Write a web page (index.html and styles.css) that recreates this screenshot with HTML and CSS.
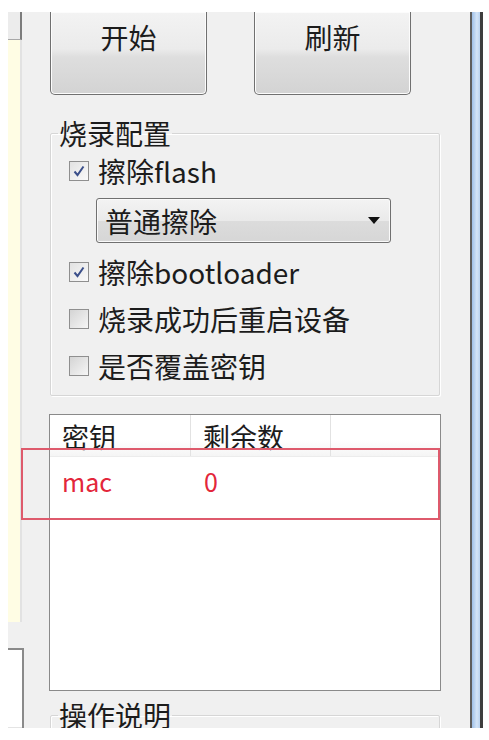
FILE: index.html
```html
<!doctype html>
<html lang="zh-CN">
<head>
    <meta charset="UTF-8">
    <meta name="viewport" content="width=device-width, initial-scale=1.0">
    <title>烧录工具</title>
    <link rel="stylesheet" href="styles.css">
</head>
<body>
<div class="screen">
    <div class="side">
        <div class="side__tab"></div>
        <div class="side__memo"></div>
        <div class="side__box"></div>
    </div>
    <div class="panel">
        <div class="actions">
            <button class="button">开始</button>
            <button class="button">刷新</button>
        </div>
        <fieldset class="group">
            <legend class="group__title">烧录配置</legend>
            <label class="check">
                <span class="check__box check__box--on"><svg viewBox="0 0 16 16" width="16" height="16"><path d="M3.5 8.5 L6.5 12 L12.5 3.5" fill="none" stroke="#3b4f8a" stroke-width="2"/></svg></span>
                <span>擦除flash</span>
            </label>
            <div class="select">
                <span>普通擦除</span>
                <span class="select__arrow"></span>
            </div>
            <label class="check">
                <span class="check__box check__box--on"><svg viewBox="0 0 16 16" width="16" height="16"><path d="M3.5 8.5 L6.5 12 L12.5 3.5" fill="none" stroke="#3b4f8a" stroke-width="2"/></svg></span>
                <span>擦除bootloader</span>
            </label>
            <label class="check">
                <span class="check__box"></span>
                <span>烧录成功后重启设备</span>
            </label>
            <label class="check">
                <span class="check__box"></span>
                <span>是否覆盖密钥</span>
            </label>
        </fieldset>
        <div class="keys">
            <div class="keys__head">
                <div class="keys__cell">密钥</div>
                <div class="keys__cell">剩余数</div>
                <div class="keys__cell"></div>
            </div>
            <div class="keys__row">
                <div class="keys__cell">mac</div>
                <div class="keys__cell">0</div>
            </div>
        </div>
        <fieldset class="group group--help">
            <legend class="group__title">操作说明</legend>
        </fieldset>
    </div>
    <div class="edge"></div>
    <div class="mark"></div>
</div>
</body>
</html>
```

FILE: styles.css
```css
html,body{margin:0;padding:0;background:#fff;font-family:"Noto Sans CJK SC","Microsoft YaHei",sans-serif;color:#1c1c1c}
.screen{position:relative;display:flex;margin:12px 6px 0 8px;height:716px;overflow:hidden;background:#f0f0f0}

.side{display:flex;flex-direction:column;width:16px;flex:none}
.side__tab{width:12px;height:27px;background:#ececec;border-right:2px solid #7c7c7c;border-bottom:1px solid #a8a8a8}
.side__memo{width:12px;height:582px;background:#fffde4;border-right:2px solid #e2e2e2}
.side__box{margin-top:26px;flex:1;background:#fff;border-top:2px solid #8a8a8a;border-right:2px solid #8a8a8a;box-shadow:inset 0 -36px 0 -35px #e4e4e4}

.panel{flex:1;padding-left:26px;font-size:28px;line-height:30px}
.actions{display:flex;gap:47px}
.button{width:157px;height:83px;padding:0 0 32px;margin:0;border:1px solid #707070;border-top:none;border-radius:0 0 5px 5px;background:linear-gradient(#f3f3f3,#ebebeb 45%,#dedede 55%,#d3d3d3);font:inherit;font-size:28px;line-height:30px;color:#1c1c1c;text-align:center;vertical-align:top;box-shadow:inset 0 0 0 1px #fcfcfc}

.group{width:390px;box-sizing:border-box;margin:23px 0 0;padding:0 0 6px 18px;border:1px solid #d6d6d6;box-shadow:inset 1px 1px 0 #fff,1px 1px 0 #fff;border-radius:2px}
.group__title{padding:0 1px;margin-left:-11px;font-size:28px;line-height:30px}

.check{display:flex;align-items:center;gap:9px;height:47px;white-space:nowrap}
.check:first-of-type{height:46px}
.check__box{display:flex;align-items:center;justify-content:center;width:18px;height:18px;border:1px solid #8f8f8f;background:linear-gradient(135deg,#d4d4d4,#f6f6f6);flex:none}
.check__box--on{background:linear-gradient(135deg,#e2e2e2,#fafafa)}

.select{display:flex;align-items:center;justify-content:space-between;width:295px;height:45px;box-sizing:border-box;margin:4px 0 5px 27px;padding:0 10px 0 8px;border:1px solid #707070;border-radius:3px;background:linear-gradient(#f3f3f3,#eaeaea 50%,#dcdcdc 52%,#d6d6d6);box-shadow:inset 0 0 0 1px #fafafa}
.select__arrow{width:0;height:0;border-left:6px solid transparent;border-right:6px solid transparent;border-top:7px solid #111}

.keys{width:392px;height:277px;box-sizing:border-box;margin:18px 0 0 -1px;border:1px solid #8a8a8a;background:#fff;font-size:27px}
.keys__head{display:flex;height:41px;border-bottom:1px solid #ececec;background:linear-gradient(#fff,#fff 60%,#f5f5f5)}
.keys__head .keys__cell{border-right:1px solid #e2e2e2;padding-top:7px}
.keys__head .keys__cell:last-child{border-right:none;flex:1}
.keys__cell{width:140px;box-sizing:border-box;padding-left:12px}
.keys__cell:first-child{width:141px}
.keys__row{display:flex;height:48px;align-items:center;color:#e3263a;font-size:25px}
.keys__row .keys__cell:nth-child(2){padding-left:13px}

.group--help{margin-top:9px;height:60px;padding-bottom:0}

.edge{width:13px;flex:none;box-sizing:border-box;border-left:2px solid #5e5e5e;border-right:3px solid #3e3e3e;background:linear-gradient(90deg,#9fc0e8,#d4e5f8 60%,#b9d2ef)}

.mark{position:absolute;left:13px;top:436px;width:419px;height:72px;box-sizing:border-box;border:2px solid #de5a6c}
```
